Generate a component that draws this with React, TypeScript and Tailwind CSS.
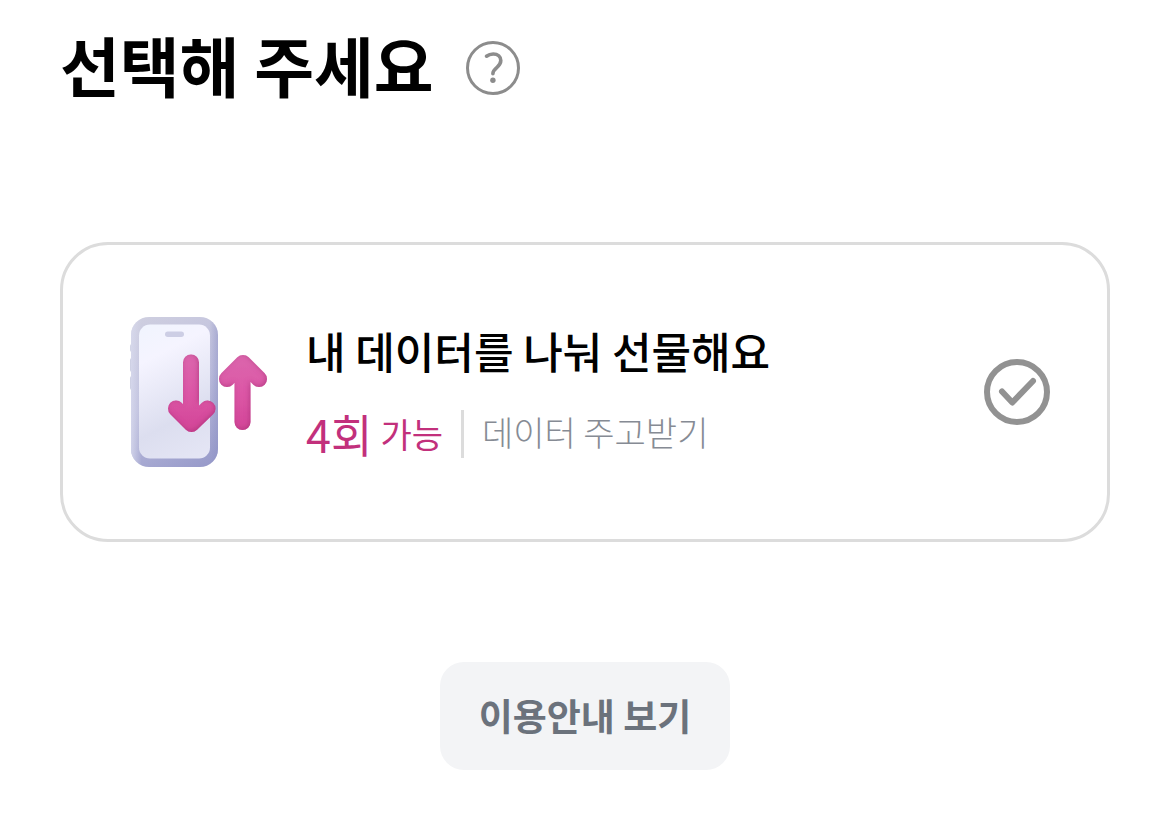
import { useState } from 'react';

interface GiftOption {
  id: string;
  title: string;
  count: string;
  countSuffix: string;
  description: string;
}

const OPTIONS: GiftOption[] = [
  {
    id: 'share-data',
    title: '내 데이터를 나눠 선물해요',
    count: '4회',
    countSuffix: '가능',
    description: '데이터 주고받기',
  },
];

function HelpIcon() {
  return (
    <svg width="54" height="54" viewBox="0 0 54 54" fill="none" aria-hidden="true">
      <circle cx="27" cy="27" r="25.5" stroke="#8c8c8c" strokeWidth="3" />
      <path
        d="M20.5 15.2c2-1.5 4.2-2.2 6.700-2.200 4.700 0 7.600 2.600 7.600 6.600 0 3.200-1.800 5-3.900 6.900-2.300 2-4 3.400-4 6.200"
        stroke="#8c8c8c"
        strokeWidth="3.6"
        strokeLinecap="round"
      />
      <circle cx="26.9" cy="39.3" r="2.7" fill="#8c8c8c" />
    </svg>
  );
}

function CheckIcon() {
  return (
    <svg width="66" height="66" viewBox="0 0 66 66" fill="none" aria-hidden="true">
      <circle cx="33" cy="33" r="30" stroke="#929292" strokeWidth="6" />
      <path
        d="M18 32.5 28.3 43.5 49 22"
        stroke="#929292"
        strokeWidth="6"
        strokeLinecap="round"
        strokeLinejoin="round"
      />
    </svg>
  );
}

function PhoneIcon() {
  return (
    <svg width="150" height="150" viewBox="-1 0 150 150" fill="none" aria-hidden="true">
      <defs>
        <linearGradient id="phone-body" x1="10" y1="0" x2="88" y2="150" gradientUnits="userSpaceOnUse">
          <stop stopColor="#cfcfe0" />
          <stop offset="0.5" stopColor="#bdbedd" />
          <stop offset="1" stopColor="#9699c9" />
        </linearGradient>
        <linearGradient id="phone-side" x1="6" y1="0" x2="93" y2="0" gradientUnits="userSpaceOnUse">
          <stop stopColor="#d9dbee" stopOpacity="0.8" />
          <stop offset="0.12" stopColor="#d9dbee" stopOpacity="0" />
          <stop offset="0.9" stopColor="#8d91c5" stopOpacity="0" />
          <stop offset="1" stopColor="#8d91c5" stopOpacity="0.5" />
        </linearGradient>
        <linearGradient id="phone-screen" x1="18" y1="12" x2="86" y2="144" gradientUnits="userSpaceOnUse">
          <stop stopColor="#f1f4fe" />
          <stop offset="0.2" stopColor="#f5f4ff" />
          <stop offset="0.65" stopColor="#dcdeef" />
          <stop offset="1" stopColor="#e6e7f6" />
        </linearGradient>
        <linearGradient id="arrow" x1="0" y1="37" x2="0" y2="115" gradientUnits="userSpaceOnUse">
          <stop stopColor="#db67ad" />
          <stop offset="0.5" stopColor="#dc57a6" />
          <stop offset="1" stopColor="#d24597" />
        </linearGradient>
        {/* darker rim on the inside of the arrows */}
        <filter id="arrow-shade" x="-20%" y="-20%" width="140%" height="140%">
          <feGaussianBlur in="SourceAlpha" stdDeviation="2.5" result="blur" />
          <feOffset in="blur" dx="-1" dy="-1" result="offset" />
          <feComposite in="SourceAlpha" in2="offset" operator="out" result="edge" />
          <feFlood floodColor="#ab3078" floodOpacity="0.75" />
          <feComposite in2="edge" operator="in" result="shade" />
          <feMerge>
            <feMergeNode in="SourceGraphic" />
            <feMergeNode in="shade" />
          </feMerge>
        </filter>
        <filter id="soft" x="-10%" y="-10%" width="120%" height="120%">
          <feGaussianBlur stdDeviation="0.7" />
        </filter>
      </defs>
      <rect x="5" y="27" width="4" height="8" rx="2" fill="#d3d5e6" />
      <rect x="5" y="41" width="4" height="14" rx="2" fill="#cfd1e4" />
      <rect x="5" y="59" width="4" height="14" rx="2" fill="#cfd1e4" />
      <rect x="6" y="0" width="87" height="150" rx="18" fill="url(#phone-body)" />
      <rect x="6" y="0" width="87" height="150" rx="18" fill="url(#phone-side)" />
      <rect x="14" y="7.5" width="71" height="134" rx="11" fill="url(#phone-screen)" filter="url(#soft)" />
      <rect x="40" y="14.5" width="19" height="5.5" rx="2.75" fill="#cdcee5" />
      <g
        stroke="url(#arrow)"
        strokeWidth="16"
        strokeLinecap="round"
        strokeLinejoin="round"
        filter="url(#arrow-shade)"
      >
        <path d="M66 45.5V102M51 91.5 66.500 107 82.500 91.500" />
        <path d="M117.500 105V50M102 62 118 46 134 62" />
      </g>
    </svg>
  );
}

interface OptionCardProps {
  option: GiftOption;
  selected: boolean;
  onSelect: (id: string) => void;
}

function OptionCard({ option, selected, onSelect }: OptionCardProps) {
  return (
    <button
      type="button"
      aria-pressed={selected}
      onClick={() => onSelect(option.id)}
      className="flex w-full items-center rounded-[48px] border-3 border-[#dcdcdc] py-18 pr-[57px] pl-[61px] text-left"
    >
      <span className="shrink-0">
        <PhoneIcon />
      </span>
      <span className="flex min-w-0 flex-1 flex-col gap-5 pl-8">
        <span className="text-[43px] leading-[64px] font-medium text-black">{option.title}</span>
        <span className="flex items-center gap-[18px]">
          <span className="flex items-center gap-2 leading-[64px] text-[#c2307c]">
            <span className="text-[45px] font-normal">{option.count}</span>
            <span className="text-[34px] font-normal">{option.countSuffix}</span>
          </span>
          <span className="h-12 w-[3px] bg-[#dcdcdc]" />
          <span className="pb-1 text-[34px] leading-[48px] font-light text-[#868b94]">{option.description}</span>
        </span>
      </span>
      <span className="shrink-0">
        <CheckIcon />
      </span>
    </button>
  );
}

export default function App() {
  const [selectedId, setSelectedId] = useState<string | null>(null);

  return (
    <main className="flex flex-col px-15 pt-5 pb-11 font-['Noto_Sans_CJK_KR',sans-serif]">
      <header className="flex items-center gap-8">
        <h1 className="pb-2 text-[65px] leading-[88px] font-bold text-black">선택해 주세요</h1>
        <button type="button" aria-label="도움말">
          <HelpIcon />
        </button>
      </header>

      <section className="mt-[126px] flex flex-col gap-6">
        {OPTIONS.map((option) => (
          <OptionCard
            key={option.id}
            option={option}
            selected={option.id === selectedId}
            onSelect={setSelectedId}
          />
        ))}
      </section>

      <button
        type="button"
        className="mt-30 self-center rounded-3xl bg-gray-100 px-[39px] pt-[23px] pb-[25px] text-[37px] leading-[60px] font-bold text-[#6b727c]"
      >
        이용안내 보기
      </button>
    </main>
  );
}
